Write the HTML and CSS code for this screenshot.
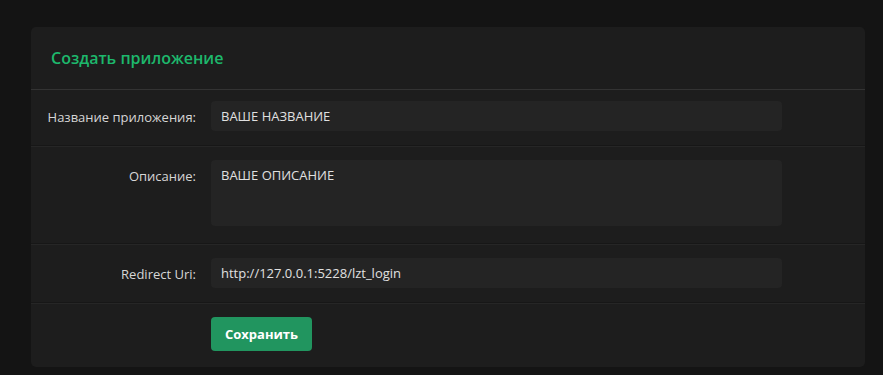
FILE: index.html
```html
<!DOCTYPE html>
<html lang="ru">
<head>
    <meta charset="UTF-8">
    <meta name="viewport" content="width=device-width, initial-scale=1.0">
    <title>Создать приложение</title>
    <link rel="stylesheet" href="styles.css">
</head>
<body>
    <div class="block">
        <h2 class="block-title">Создать приложение</h2>
        <form class="block-body">
            <div class="form-row">
                <label class="form-label" for="app-name">Название приложения:</label>
                <input type="text" id="app-name" class="form-input" value="ВАШЕ НАЗВАНИЕ">
            </div>
            <div class="form-row">
                <label class="form-label" for="app-desc">Описание:</label>
                <textarea id="app-desc" class="form-input form-textarea">ВАШЕ ОПИСАНИЕ</textarea>
            </div>
            <div class="form-row">
                <label class="form-label" for="redirect-uri">Redirect Uri:</label>
                <input type="text" id="redirect-uri" class="form-input" value="http://127.0.0.1:5228/lzt_login">
            </div>
            <div class="form-row form-submit">
                <span class="form-label"></span>
                <button type="submit" class="save-btn">Сохранить</button>
            </div>
        </form>
    </div>
</body>
</html>
```

FILE: styles.css
```css
body {
    margin: 0;
    background-color: #141414;
    font-family: "Open Sans", Arial, sans-serif;
    color: #d6d6d6;
    font-size: 13px;
    padding: 27px 18px 10px 31px;
}

.block {
    background-color: #1d1d1d;
    border-radius: 5px;
    width: 834px;
    overflow: hidden;
}

.block-title {
    margin: 0;
    padding: 0 20px;
    height: 62px;
    line-height: 62px;
    font-size: 16px;
    font-weight: 600;
    color: #1db86c;
    border-bottom: 1px solid #333333;
}

.form-row {
    display: flex;
    align-items: flex-start;
    padding: 13px 0 14px;
    border-bottom: 1px solid #171717;
    box-shadow: 0 1px 0 #262626;
    margin-bottom: 1px;
}

.form-row:first-child {
    padding-top: 11px;
}

.form-row:last-child {
    border-bottom: none;
    box-shadow: none;
    margin-bottom: 0;
    padding: 13px 0 16px;
}

.form-label {
    width: 165px;
    flex-shrink: 0;
    text-align: right;
    padding: 7px 15px 0 0;
    color: #d6d6d6;
}

.form-input {
    width: 571px;
    height: 30px;
    box-sizing: border-box;
    padding: 0 10px;
    background-color: #242424;
    border: none;
    border-radius: 4px;
    color: #e0e0e0;
    font-family: "Open Sans", Arial, sans-serif;
    font-size: 13px;
    outline: none;
}

.form-textarea {
    height: 66px;
    margin-bottom: 3px;
    padding: 6px 10px;
    resize: none;
    line-height: 18px;
}

.save-btn {
    width: 101px;
    height: 34px;
    background-color: #21955f;
    color: #ffffff;
    border: none;
    border-radius: 4px;
    font-family: "Open Sans", Arial, sans-serif;
    font-size: 13px;
    font-weight: 700;
    cursor: pointer;
}
```
